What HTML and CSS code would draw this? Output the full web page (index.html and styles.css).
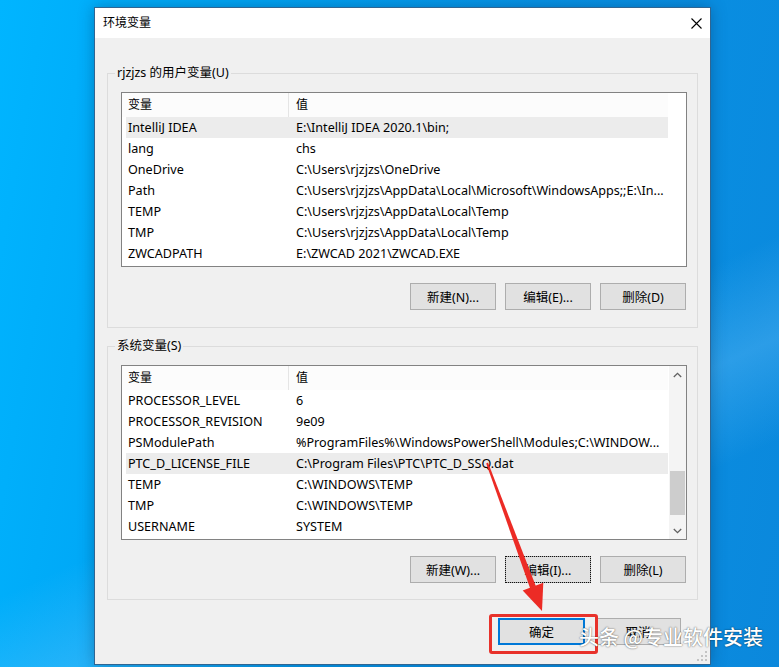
FILE: index.html
```html
<!DOCTYPE html>
<html lang="zh-CN">
<head>
<meta charset="utf-8">
<title>环境变量</title>
<link rel="stylesheet" href="styles.css">
</head>
<body>
<div class="desktop">
  <div class="dialog">
    <div class="titlebar">
      <span class="title">环境变量</span>
      <svg class="close" width="11" height="11" viewBox="0 0 11 11"><path d="M0.5 0.5 L10.5 10.5 M10.5 0.5 L0.5 10.5" stroke="#000" stroke-width="1.1" fill="none"/></svg>
    </div>
    <div class="body">
      <fieldset class="group g1">
        <legend>rjzjzs 的用户变量(U)</legend>
        <div class="list">
          <div class="list-main">
            <div class="lhead"><div class="c1">变量</div><div class="c2">值</div></div>
            <div class="row sel"><div class="c1">IntelliJ IDEA</div><div class="c2">E:\IntelliJ IDEA 2020.1\bin;</div></div>
            <div class="row"><div class="c1">lang</div><div class="c2">chs</div></div>
            <div class="row"><div class="c1">OneDrive</div><div class="c2">C:\Users\rjzjzs\OneDrive</div></div>
            <div class="row"><div class="c1">Path</div><div class="c2">C:\Users\rjzjzs\AppData\Local\Microsoft\WindowsApps;;E:\In...</div></div>
            <div class="row"><div class="c1">TEMP</div><div class="c2">C:\Users\rjzjzs\AppData\Local\Temp</div></div>
            <div class="row"><div class="c1">TMP</div><div class="c2">C:\Users\rjzjzs\AppData\Local\Temp</div></div>
            <div class="row"><div class="c1">ZWCADPATH</div><div class="c2">E:\ZWCAD 2021\ZWCAD.EXE</div></div>
          </div>
        </div>
        <div class="btns">
          <button class="btn">新建(N)...</button>
          <button class="btn">编辑(E)...</button>
          <button class="btn">删除(D)</button>
        </div>
      </fieldset>

      <fieldset class="group g2">
        <legend>系统变量(S)</legend>
        <div class="list">
          <div class="list-main">
            <div class="lhead"><div class="c1">变量</div><div class="c2">值</div></div>
            <div class="row"><div class="c1">PROCESSOR_LEVEL</div><div class="c2">6</div></div>
            <div class="row"><div class="c1">PROCESSOR_REVISION</div><div class="c2">9e09</div></div>
            <div class="row"><div class="c1">PSModulePath</div><div class="c2">%ProgramFiles%\WindowsPowerShell\Modules;C:\WINDOW...</div></div>
            <div class="row sel"><div class="c1">PTC_D_LICENSE_FILE</div><div class="c2">C:\Program Files\PTC\PTC_D_SSQ.dat</div></div>
            <div class="row"><div class="c1">TEMP</div><div class="c2">C:\WINDOWS\TEMP</div></div>
            <div class="row"><div class="c1">TMP</div><div class="c2">C:\WINDOWS\TEMP</div></div>
            <div class="row"><div class="c1">USERNAME</div><div class="c2">SYSTEM</div></div>
          </div>
          <div class="vscroll">
            <div class="sarrow"><svg width="9" height="6" viewBox="0 0 9 6"><polyline points="0.8,5 4.5,1.3 8.2,5" fill="none" stroke="#606060" stroke-width="1.3"/></svg></div>
            <div class="strack"><div class="sthumb"></div></div>
            <div class="sarrow"><svg width="9" height="6" viewBox="0 0 9 6"><polyline points="0.8,1 4.5,4.7 8.2,1" fill="none" stroke="#606060" stroke-width="1.3"/></svg></div>
          </div>
        </div>
        <div class="btns">
          <button class="btn">新建(W)...</button>
          <button class="btn focus">编辑(I)...</button>
          <button class="btn">删除(L)</button>
        </div>
      </fieldset>

      <div class="footer">
        <button class="btn ok">确定</button>
        <button class="btn">取消</button>
      </div>
    </div>
    <svg class="grip" width="10" height="10" viewBox="0 0 10 10">
      <rect x="8" y="0" width="2" height="2" fill="#c4c4c4"/>
      <rect x="4" y="4" width="2" height="2" fill="#c4c4c4"/><rect x="8" y="4" width="2" height="2" fill="#c4c4c4"/>
      <rect x="0" y="8" width="2" height="2" fill="#c4c4c4"/><rect x="4" y="8" width="2" height="2" fill="#c4c4c4"/><rect x="8" y="8" width="2" height="2" fill="#c4c4c4"/>
    </svg>
  </div>

  <div class="redbox"></div>
  <svg class="arrow" width="779" height="667" viewBox="0 0 779 667">
    <polygon points="488,462.6 486.2,463.4 530.2,588.5 535.8,586" fill="#ec2b25"/>
    <polygon points="542,611 522.7,590.4 543.3,582.8" fill="#ec2b25"/>
  </svg>
  <div class="watermark">头条 @专业软件安装</div>
</div>
</body>
</html>
```

FILE: styles.css
```css
* { box-sizing: border-box; }

html, body {
  margin: 0;
  padding: 0;
}

body {
  width: 779px;
  height: 667px;
  overflow: hidden;
  font-family: "Noto Sans", "Noto Sans CJK SC", sans-serif;
  font-size: 12px;
  color: #000;
}

.desktop {
  position: relative;
  width: 779px;
  height: 667px;
  padding: 7px 0 0 94px;
  background:
    linear-gradient(155deg, rgba(255,255,255,0) 0%, rgba(255,255,255,0) 58%, rgba(130,205,255,0.28) 68%, rgba(255,255,255,0) 78%),
    linear-gradient(100deg, #00b5ff 0%, #00a6f5 25%, #0793e6 60%, #0b88dc 100%);
}

.dialog {
  position: relative;
  width: 617px;
  height: 658px;
  border: 1px solid #2f6592;
  background: #f0f0f0;
  box-shadow: 0 0 14px rgba(0, 40, 80, 0.35);
  display: flex;
  flex-direction: column;
}

.titlebar {
  height: 30px;
  background: #fff;
  display: flex;
  align-items: center;
  justify-content: space-between;
  padding: 0 8px 0 8px;
}

.title {
  font-size: 12px;
  line-height: 16px;
}

.close {
  display: block;
}

.body {
  flex: 1;
  padding: 0 12px;
  display: flex;
  flex-direction: column;
}

.group {
  margin: 0;
  border: 1px solid #dcdcdc;
  padding: 11px 10px 17px 13px;
  min-width: 0;
}

.g1 { margin-top: 27px; }
.g2 { margin-top: 10px; padding-bottom: 16px; }

.group legend {
  padding: 0 2px;
  margin-left: -6px;
  line-height: 16px;
  font-size: 12.5px;
}

.list {
  height: 175px;
  border: 1px solid #828282;
  background: #fff;
  display: flex;
  overflow: hidden;
}

.list-main {
  flex: 1;
  min-width: 0;
}

.lhead {
  height: 24px;
  display: flex;
  width: 546px;
  background: #fcfcfc;
}

.lhead .c1 {
  width: 167px;
  padding-left: 6px;
  border-right: 1px solid #e5e5e5;
  line-height: 24px;
}

.lhead .c2 {
  flex: 1;
  padding-left: 7px;
  line-height: 24px;
}

.row {
  height: 21px;
  display: flex;
  width: 542px;
  margin-left: 4px;
  line-height: 21px;
  white-space: nowrap;
  font-size: 12.6px;
}

.row.sel { background: #ececec; }

.row .c1 {
  width: 163px;
  padding-left: 2px;
  overflow: hidden;
}

.row .c2 {
  flex: 1;
  padding-left: 7px;
  overflow: hidden;
}

.vscroll {
  width: 17px;
  background: #f4f4f4;
  display: flex;
  flex-direction: column;
}

.sarrow {
  height: 17px;
  display: flex;
  align-items: center;
  justify-content: center;
}

.strack {
  flex: 1;
  padding-top: 88px;
}

.sthumb {
  height: 44px;
  margin: 0 1px;
  background: #cdcdcd;
}

.btns {
  margin-top: 16px;
  display: flex;
  justify-content: flex-end;
  gap: 9px;
  padding-right: 1px;
}

.btn {
  width: 86px;
  height: 27px;
  margin: 0;
  padding: 0;
  border: 1px solid #adadad;
  background: #e1e1e1;
  font-family: "Noto Sans", "Noto Sans CJK SC", sans-serif;
  font-size: 12.5px;
  color: #000;
}

.btn.focus {
  outline: 1px dotted #111;
  outline-offset: -1px;
}

.btn.ok {
  border: 2px solid #0078d7;
  width: 87px;
}

.footer {
  margin-top: 18px;
  display: flex;
  justify-content: flex-end;
  gap: 10px;
  padding-right: 17px;
}

.grip {
  position: absolute;
  right: 3px;
  bottom: 3px;
}

.redbox {
  position: absolute;
  left: 489px;
  top: 614px;
  width: 109px;
  height: 40px;
  border: 3px solid #e8322b;
  border-radius: 3px;
}

.arrow {
  position: absolute;
  left: 0;
  top: 0;
  pointer-events: none;
}

.watermark {
  position: absolute;
  left: 579px;
  top: 624px;
  font-family: "Noto Sans CJK SC", sans-serif;
  font-size: 20px;
  font-weight: 500;
  line-height: 26px;
  color: #fff;
  white-space: nowrap;
  text-shadow: 0 0 2px rgba(0, 0, 0, 0.45), 0 0 1px rgba(0, 0, 0, 0.4);
}
```
